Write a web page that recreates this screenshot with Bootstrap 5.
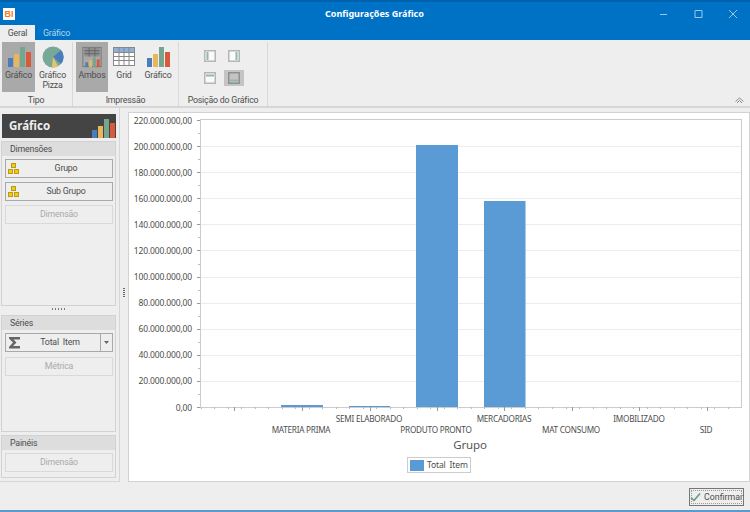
<!DOCTYPE html>
<html lang="pt"><head><meta charset="utf-8"><title>Configurações Gráfico</title>
<link href="https://cdn.jsdelivr.net/npm/bootstrap@5.3.0/dist/css/bootstrap.min.css" rel="stylesheet">
<style>
html,body{height:512px;overflow:hidden}
body{width:750px;background:#eee;font-family:Roboto,"Liberation Sans",sans-serif;font-size:8.800px;letter-spacing:-.2px;color:#4d4d4d;line-height:1.2}
.titlebar{height:25px;background:#0072c6;border-top:2px solid #0062ad;color:#fff;position:relative}
.appicon{width:12px;height:12px;margin:6px 0 0 3px;background:#fff;color:#f47a20;font:bold 9px/12px "Liberation Sans",sans-serif;letter-spacing:0;text-align:center}
.wintitle{position:absolute;left:325px;top:5px;font:bold 9px/13px "Noto Sans",sans-serif;letter-spacing:0;color:#fff;white-space:nowrap}
.winbtns{position:absolute;top:6px;left:659px}
.tabbar{height:15px;background:#0072c6}
.rtab{width:35px;height:15px;line-height:16px;text-align:center;color:#b5d5f0;padding:0}
.rtab.on{background:#eee;color:#4d4d4d}
.rtab.next{margin-left:4px}
.ribbon{height:68px;background:#eee;border-bottom:2px solid #d6d6d6;position:relative}
.rgroup{height:64px;margin-top:2px;border-right:1px solid #d8d8d8;position:relative}
.rlabel{position:absolute;bottom:0;left:0;right:0;text-align:center;line-height:11px}
.rbtn{height:50px;padding-top:3px;text-align:center;line-height:9.500px;flex:none}
.rbtn svg{display:block;margin:0 auto 2px}
.rbtn.on{background:#a9a9a9}
.posgrid{display:grid;grid-template-columns:24px 24px;grid-auto-rows:22px;gap:0;margin:3px 0 0 19px}
.pos{display:flex;align-items:center;justify-content:center}
.pos.on{background:#c4c4c4;width:20px;height:16px;margin:3px 0 0 2px}
.collapse-arrow{position:absolute;right:6px;bottom:2px}
.mainrow{height:376px}
.leftcol{width:120px;height:374px;border:1px solid #d6d6d6;border-left:0;border-top:0;padding:4px 3px 0 1px;background:#eee;flex:none}
.splitter{width:8px;flex:none;display:flex;align-items:center;justify-content:center;padding-bottom:8px}
.dots{width:2px;height:9px;background:repeating-linear-gradient(#666 0 1px,transparent 1px 2px)}
.chartbox{width:622px;height:370px;margin-top:4px;background:#fff;border:1px solid #d2d2d2;flex:none}
.charthead{height:24px;margin:2px 0 3px 1px;background:#444;color:#eee;font:bold 11.500px/24px "Noto Sans",sans-serif;letter-spacing:0;padding:0 0 0 7px;display:flex;justify-content:space-between;align-items:flex-end}
.pgroup{border:1px solid #d2d2d2;background:#eee}
.pgroup+.pgroup{margin-top:3px}
.phead{height:14px;background:#ddd;line-height:14px;padding-left:8px}
.pbody{padding:3px 3px 0 3px}
.fbtn{height:19px;width:108px;border:1px solid #a9a9a9;background:#eee;display:flex;align-items:center;justify-content:center;position:relative;margin-bottom:4px}
.fbtn.icon{padding-left:14px}
.fbtn.off{border-color:#d9d9d9;color:#aaa}
.fbtn svg{position:absolute;left:2px;top:3px}
.fcombo{display:flex;width:108px;height:19px;border:1px solid #a9a9a9;margin-bottom:5px;position:relative}
.fcombo .main{flex:1;display:flex;align-items:center;justify-content:center;padding-left:14px;border-right:1px solid #a9a9a9;word-spacing:2px}
.fcombo .drop{width:11px;display:flex;align-items:center;justify-content:center}
.fcombo svg.sig{position:absolute;left:2px;top:2px}
.gdots{height:4px;margin:2px 0 3px;text-align:center;display:flex;justify-content:center}
.hdots{width:13px;height:2px;background:repeating-linear-gradient(90deg,#777 0 1px,transparent 1px 3px)}
.footerbar{height:26px;position:relative;background:#eee}
.okbtn{position:absolute;left:689px;top:4px;width:55px;height:18px;border:1px solid #777;outline:1px dotted #999;outline-offset:-3px;background:#eee;color:#4d4d4d;display:flex;align-items:center;justify-content:center;gap:3px;padding:0;font-size:8.800px}
.bottomstrip{height:2px;background:#5a9bd0}
svg text{font-family:"Noto Sans","Liberation Sans",sans-serif;fill:#4d4d4d;letter-spacing:-.15px}
</style></head><body>
<div class="titlebar"><div class="appicon">BI</div><div class="wintitle">Configurações Gráfico</div>
<svg class="winbtns" width="82" height="13" viewBox="0 0 82 13"><path d="M1 6.500h7" stroke="#9cc8ea" stroke-width="1"/><path d="M36.500 2.500h6.500v7h-7v-7z" fill="none" stroke="#9cc8ea"/><path d="M70 2l8 8M78 2l-8 8" stroke="#9cc8ea"/></svg></div>
<div class="tabbar d-flex"><div class="rtab on">Geral</div><div class="rtab next">Gráfico</div></div>
<div class="ribbon d-flex">
 <div class="rgroup d-flex" style="width:73px;padding-left:2px">
  <div class="rbtn on" style="width:33px"><svg width="24" height="24" viewBox="0 0 24 24"><rect x="1" y="13" width="5" height="9" fill="#4a7ebb"/><rect x="7" y="9" width="5" height="13" fill="#e8b65c"/><rect x="13" y="2" width="5" height="20" fill="#75a58e"/><rect x="19" y="7" width="5" height="15" fill="#d9593c"/></svg>Gráfico</div>
  <div class="rbtn" style="width:35px"><svg width="24" height="24" viewBox="0 0 24 24"><circle cx="12" cy="12" r="10.500" fill="#78a896"/><path d="M12 12L20 5A10.500 10.500 0 0 1 20 19z" fill="#4a7ebb"/><path d="M12 12L17 21A10.500 10.500 0 0 1 11 22.500z" fill="#e8c46c"/></svg>Gráfico<br>Pizza</div>
  <div class="rlabel">Tipo</div></div>
 <div class="rgroup d-flex" style="width:106px;padding-left:3px">
  <div class="rbtn on" style="width:32px"><svg width="24" height="24" viewBox="0 0 24 25"><rect x="2.500" y="2.500" width="19" height="20" fill="#a9a9a9" stroke="#777"/><path d="M4 3h16v9H4z" fill="#8f8f8f"/><path d="M4 6h16M4 9h16M9 3v9M15 3v9" stroke="#666"/><rect x="5" y="18" width="3" height="5" fill="#4a7ebb"/><rect x="9" y="16" width="3" height="7" fill="#e8b65c"/><rect x="13" y="13" width="3" height="10" fill="#75a58e"/><rect x="17" y="15" width="3" height="8" fill="#d9593c"/></svg>Ambos</div>
  <div class="rbtn" style="width:32px"><svg width="22" height="24" viewBox="0 0 22 24"><rect x=".5" y="2.500" width="21" height="18" fill="#fff" stroke="#888"/><rect x="1" y="3" width="20" height="4" fill="#8fb0d8"/><path d="M1 7.500h20M1 11.500h20M1 15.500h20M6 3v17M11 3v17M16 3v17" stroke="#888"/></svg>Grid</div>
  <div class="rbtn" style="width:36px"><svg width="24" height="24" viewBox="0 0 24 24"><rect x="1" y="13" width="5" height="9" fill="#4a7ebb"/><rect x="7" y="9" width="5" height="13" fill="#e8b65c"/><rect x="13" y="2" width="5" height="20" fill="#75a58e"/><rect x="19" y="7" width="5" height="15" fill="#d9593c"/></svg>Gráfico</div>
  <div class="rlabel">Impressão</div></div>
 <div class="rgroup" style="width:89px">
  <div class="posgrid">
   <div class="pos"><svg width="12" height="12"><rect x=".75" y=".75" width="10.500" height="10.500" fill="#fafafa" stroke="#b5b5b5" stroke-width="1.500"/><rect x="2.500" y="2" width="2" height="8" fill="#8dbca6"/></svg></div>
   <div class="pos"><svg width="12" height="12"><rect x=".75" y=".75" width="10.500" height="10.500" fill="#fafafa" stroke="#b5b5b5" stroke-width="1.500"/><rect x="7.500" y="2" width="2" height="8" fill="#8dbca6"/></svg></div>
   <div class="pos"><svg width="12" height="12"><rect x=".75" y=".75" width="10.500" height="10.500" fill="#fafafa" stroke="#b5b5b5" stroke-width="1.500"/><rect x="2" y="2.500" width="8" height="2" fill="#8dbca6"/></svg></div>
   <div class="pos on"><svg width="12" height="12"><rect x=".75" y=".75" width="10.500" height="10.500" fill="#c4c4c4" stroke="#8f8f8f" stroke-width="1.500"/><rect x="2" y="7.500" width="8" height="2" fill="#8dbca6"/></svg></div>
  </div>
  <div class="rlabel">Posição do Gráfico</div></div>
 <svg class="collapse-arrow" width="9" height="7" viewBox="0 0 9 7"><path d="M.5 4.500L4.500 1l4 3.500M2 6l2.500-2.500L7 6" fill="none" stroke="#888"/></svg>
</div>
<div class="mainrow d-flex">
 <div class="leftcol">
  <div class="charthead"><span>Gráfico</span><svg width="24" height="20" viewBox="0 0 24 20"><rect x="0" y="12" width="5" height="8" fill="#4a7ebb"/><rect x="6" y="8" width="5" height="12" fill="#e8b65c"/><rect x="12" y="1" width="5" height="19" fill="#75a58e"/><rect x="18" y="5" width="5" height="15" fill="#d9593c"/></svg></div>
  <div class="pgroup" style="height:165px"><div class="phead">Dimensões</div><div class="pbody">
   <div class="fbtn icon"><svg width="11" height="11"><rect x="3.500" y=".5" width="4" height="4" fill="#f6cc00" stroke="#b89a20"/><rect x=".5" y="6.500" width="4" height="4" fill="#f6cc00" stroke="#b89a20"/><rect x="6.500" y="6.500" width="4" height="4" fill="#f6cc00" stroke="#b89a20"/></svg>Grupo</div>
   <div class="fbtn icon"><svg width="11" height="11"><rect x="3.500" y=".5" width="4" height="4" fill="#f6cc00" stroke="#b89a20"/><rect x=".5" y="6.500" width="4" height="4" fill="#f6cc00" stroke="#b89a20"/><rect x="6.500" y="6.500" width="4" height="4" fill="#f6cc00" stroke="#b89a20"/></svg>Sub Grupo</div>
   <div class="fbtn off">Dimensão</div></div></div>
  <div class="gdots"><div class="hdots"></div></div>
  <div class="pgroup" style="height:117px;margin-top:0"><div class="phead">Séries</div><div class="pbody">
   <div class="fcombo"><svg class="sig" width="13" height="13" viewBox="0 0 13 13"><path d="M1 1h11v2.500H5.500L8.500 6.500 5 10h7v2.500H1V11l4-4.500L1 2.500z" fill="#666"/></svg><div class="main">Total Item</div><div class="drop"><svg width="5" height="3"><path d="M0 0h5L2.500 3z" fill="#666"/></svg></div></div>
   <div class="fbtn off">Métrica</div></div></div>
  <div class="pgroup" style="height:43px"><div class="phead">Painéis</div><div class="pbody"><div class="fbtn off">Dimensão</div></div></div>
 </div>
 <div class="splitter"><div class="dots"></div></div>
 <div class="chartbox">
  <svg id="chart" width="620" height="368" viewBox="129 113 620 368" font-size="8.500"></svg>
 </div>
</div>
<div class="footerbar"><button class="okbtn"><svg width="11" height="10" viewBox="0 0 11 10"><path d="M1 5.500L4 8.500 10 1.500" fill="none" stroke="#5b9a7c" stroke-width="1.500"/></svg>Confirmar</button></div>
<div class="bottomstrip"></div>
<script>
const c=[];const L=200,R=741,T=120,B=407,st=(B-T)/11;
for(let i=0;i<=11;i++){const y=B-i*st;const v=i===0?'0,00':(i*20)+'.000.000,00';
 c.push(`<text x="192" y="${y+3.500}" text-anchor="end">${v}</text>`);
 c.push(`<path d="M197 ${Math.round(y)+.5}h3" stroke="#999"/>`);
 if(i<11){c.push(`<path d="M198 ${Math.round(y-st/2)+.5}h2" stroke="#bbb"/>`);}
 if(i>0&&i<11)c.push(`<path d="M200 ${Math.round(y)+.5}H741" stroke="#ececec"/>`);}
c.push(`<rect x="200.500" y="119.500" width="541" height="288" fill="none" stroke="#ccc"/>`);
[[281,323,405],[349,390,406],[416,458,145],[484,525.500,201]].forEach(b=>c.push(`<rect x="${b[0]}" y="${b[2]}" width="${b[1]-b[0]}" height="${B-b[2]}" fill="#5b9bd5"/>`));
for(let x=200.500;x<741;x+=13.520)c.push(`<path d="M${Math.round(x)+.5} 407v2" stroke="#bbb"/>`);
[234,302,370,437,504,572,639,707].forEach(x=>c.push(`<path d="M${x+.5} 407v4" stroke="#999"/>`));
[['MATERIA PRIMA',301,432.500],['SEMI ELABORADO',369,422],['PRODUTO PRONTO',436,432.500],['MERCADORIAS',504,422],['MAT CONSUMO',571,432.500],['IMOBILIZADO',639,422],['SID',706,432.500]].forEach(t=>c.push(`<text x="${t[1]}" y="${t[2]}" text-anchor="middle" font-size="8.200" style="letter-spacing:-.25px">${t[0]}</text>`));
c.push(`<text x="470" y="449" text-anchor="middle" font-size="11.500" style="fill:#555">Grupo</text>`);
c.push(`<rect x="407.500" y="457.500" width="63" height="15" fill="#fff" stroke="#ccc"/><rect x="410" y="460" width="14" height="11" fill="#5b9bd5"/><text x="427" y="468" word-spacing="2">Total Item</text>`);
document.getElementById('chart').innerHTML=c.join('');
</script>
<script src="https://cdn.jsdelivr.net/npm/bootstrap@5.3.0/dist/js/bootstrap.bundle.min.js"></script>
</body></html>
